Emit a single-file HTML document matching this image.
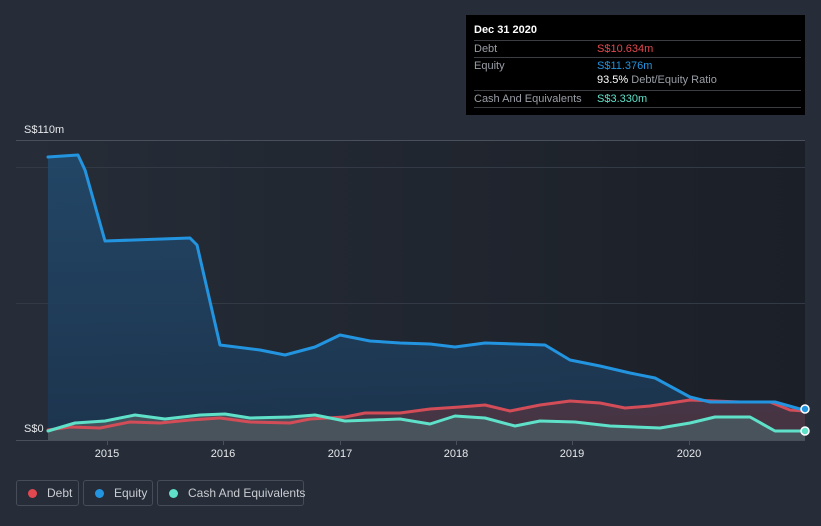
<!DOCTYPE html>
<html><head><meta charset="utf-8"><style>
body{margin:0;width:821px;height:526px;background:#262d38;font-family:"Liberation Sans",sans-serif;overflow:hidden;position:relative}
.tt{position:absolute;left:466px;top:15px;width:339px;height:100px;background:#000;font-size:11px}
.row{position:absolute;left:8px;width:327px;border-top:1px solid #3a3d42;color:#9a9ea6;white-space:nowrap}
.lg{position:absolute;top:480px;height:26px;border:1px solid #464d59;border-radius:3px;color:#c9ccd1;font-size:12px;line-height:24px;box-sizing:border-box;white-space:nowrap}
.dot{display:inline-block;width:9px;height:9px;border-radius:50%;margin:0 10px 0 11px;vertical-align:-1px}
</style></head><body>
<svg width="821" height="526" style="position:absolute;left:0;top:0">
<defs>
<linearGradient id="bg" x1="0" x2="1"><stop offset="0" stop-color="#262d38"/><stop offset="1" stop-color="#1b1f27"/></linearGradient>
<linearGradient id="eq" x1="0" y1="0" x2="0" y2="1"><stop offset="0" stop-color="#22496b"/><stop offset="1" stop-color="#1c3550"/></linearGradient>
</defs>
<rect x="16" y="140" width="789" height="300" fill="url(#bg)"/>
<rect x="16" y="140" width="32" height="300" fill="#262d38"/>
<line x1="16" y1="140.5" x2="805" y2="140.5" stroke="#4a505b"/>
<line x1="16" y1="167.5" x2="805" y2="167.5" stroke="#343a45"/>
<line x1="16" y1="303.5" x2="805" y2="303.5" stroke="#343a45"/>
<g stroke-linejoin="round" stroke-linecap="round">
<polygon fill="url(#eq)" opacity="0.9" points="48,157 78,155 85,170 105,241 190,238 197,245 220,345 260,350 285,355 315,347 340,335 370,341 400,343 430,344 455,347 485,343 545,345 570,360 600,366 630,373 655,378 690,397 710,402 775,402 800,409 805,409 805,440 48,440"/>
<polygon fill="#4e3542" opacity="0.85" points="48,430 70,427 100,428 130,422 160,423 190,420 220,418 250,422 290,423 310,419 345,417 365,413 400,413 430,409 460,407 485,405 510,411 540,405 570,401 600,403 625,408 650,406 690,400 740,402 770,402 790,410 805,411 805,440 48,440"/>
<polygon fill="#48575e" opacity="0.9" points="48,431 75,423 105,421 135,415 165,419 200,415 225,414 250,418 290,417 315,415 345,421 400,419 430,424 455,416 485,418 515,426 540,421 575,422 610,426 660,428 690,423 715,417 750,417 775,431 805,431 805,440 48,440"/>
<polyline fill="none" stroke="#d24d57" stroke-width="3" points="48,430 70,427 100,428 130,422 160,423 190,420 220,418 250,422 290,423 310,419 345,417 365,413 400,413 430,409 460,407 485,405 510,411 540,405 570,401 600,403 625,408 650,406 690,400 740,402 770,402 790,410 805,411"/>
<polyline fill="none" stroke="#2394df" stroke-width="3" points="48,157 78,155 85,170 105,241 190,238 197,245 220,345 260,350 285,355 315,347 340,335 370,341 400,343 430,344 455,347 485,343 545,345 570,360 600,366 630,373 655,378 690,397 710,402 775,402 800,409 805,409"/>
<polyline fill="none" stroke="#5ee0c9" stroke-width="3" points="48,431 75,423 105,421 135,415 165,419 200,415 225,414 250,418 290,417 315,415 345,421 400,419 430,424 455,416 485,418 515,426 540,421 575,422 610,426 660,428 690,423 715,417 750,417 775,431 805,431"/>
</g>
<circle cx="805" cy="409" r="4" fill="#2394df" stroke="#fff" stroke-width="1.5"/>
<circle cx="805" cy="431" r="4" fill="#5ee0c9" stroke="#fff" stroke-width="1.5"/>
<line x1="16" y1="440.5" x2="805" y2="440.5" stroke="#4a505b"/>
<g stroke="#4a505b"><line x1="107.5" y1="440" x2="107.5" y2="445"/><line x1="223.5" y1="440" x2="223.5" y2="445"/><line x1="340.5" y1="440" x2="340.5" y2="445"/><line x1="456.5" y1="440" x2="456.5" y2="445"/><line x1="572.5" y1="440" x2="572.5" y2="445"/><line x1="689.5" y1="440" x2="689.5" y2="445"/></g>
<g fill="#e6e8eb" font-size="11" font-family="Liberation Sans,sans-serif" text-anchor="middle">
<text x="107" y="457">2015</text><text x="223" y="457">2016</text><text x="340" y="457">2017</text><text x="456" y="457">2018</text><text x="572" y="457">2019</text><text x="689" y="457">2020</text>
<text x="24" y="133" text-anchor="start">S$110m</text>
<text x="24" y="432" text-anchor="start">S$0</text>
</g>
</svg>
<div class="tt">
<div style="position:absolute;left:8px;top:9px;color:#fff;font-weight:bold">Dec 31 2020</div>
<div class="row" style="top:25px;height:16px;line-height:16px">Debt<span style="position:absolute;left:123px;color:#e2484f">S$10.634m</span></div>
<div class="row" style="top:42px;height:16px;line-height:16px">Equity<span style="position:absolute;left:123px;color:#2394df">S$11.376m</span></div>
<div style="position:absolute;left:131px;top:59px;color:#9a9ea6;white-space:nowrap"><span style="color:#fff">93.5%</span> Debt/Equity Ratio</div>
<div class="row" style="top:75px;height:16px;line-height:16px">Cash And Equivalents<span style="position:absolute;left:123px;color:#5ee0c9">S$3.330m</span></div>
<div class="row" style="top:92px;height:0"></div>
</div>
<div class="lg" style="left:16px;width:63px"><span class="dot" style="background:#e2484f"></span>Debt</div>
<div class="lg" style="left:83px;width:70px"><span class="dot" style="background:#2394df"></span>Equity</div>
<div class="lg" style="left:157px;width:147px"><span class="dot" style="background:#5ee0c9"></span>Cash And Equivalents</div>
</body></html>
